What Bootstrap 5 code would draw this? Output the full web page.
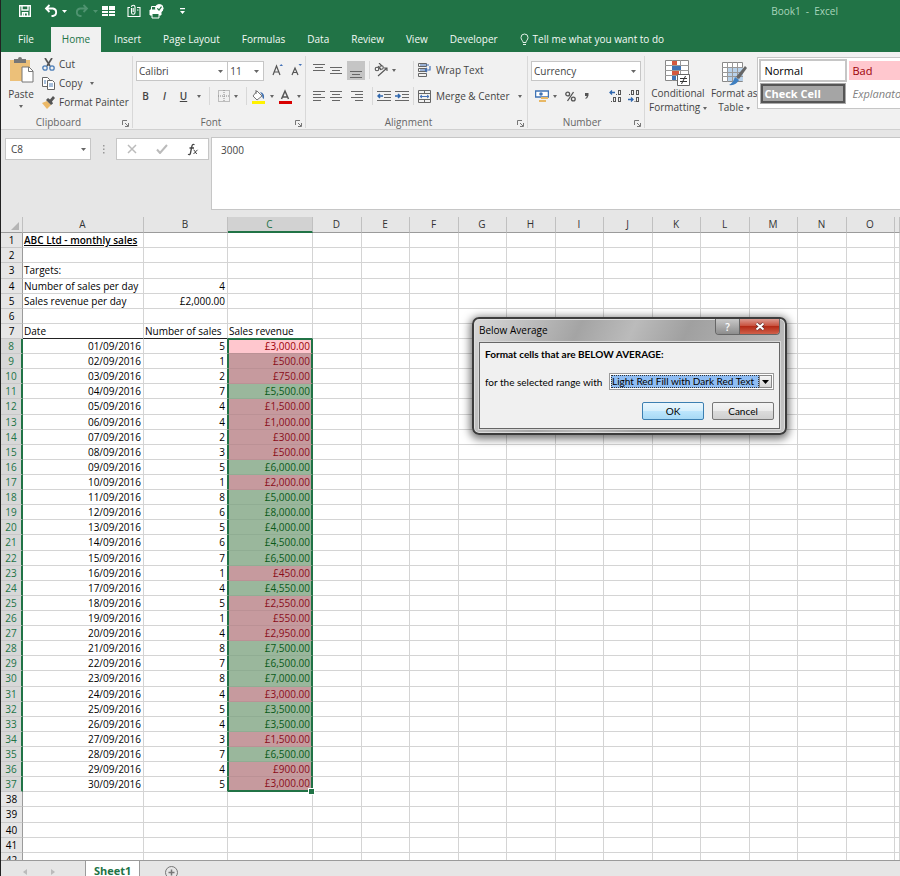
<!DOCTYPE html>
<html lang="en">
<head>
<meta charset="utf-8">
<meta name="viewport" content="width=device-width, initial-scale=1">
<title>Book1 - Excel</title>
<link href="https://cdn.jsdelivr.net/npm/bootstrap@5.3.0/dist/css/bootstrap.min.css" rel="stylesheet">
<style>
:root{--xl-green:#217346;--xl-face:#f1f1f1;--xl-bar:#e6e6e6;--xl-line:#d4d4d4;--xl-edge:#ababab}
body{font-family:"Open Sans","Noto Sans",sans-serif;font-size:10px;line-height:14px;color:#444;background:#fff}
button{font:inherit;color:inherit;background:none;border:0;padding:0;white-space:nowrap}
svg{display:block;flex:none}
.fw-bold{font-weight:600!important}
.app-shell{height:100vh;overflow:hidden;border-left:1px solid #222}
.title-strip,.tab-strip{background:var(--xl-green);color:#fff}
.title-strip{height:27px;padding:0 0 5px 17px}
.title-strip button{height:22px}
.doc-name{color:#a9d5bb;padding-right:62px}
.tab-strip{height:25px;padding-left:8px}
.tab-strip a{color:#f4faf6;text-decoration:none;height:25px;line-height:25px;padding:0 9px}
.tab-strip a.is-open{background:var(--xl-face);color:var(--xl-green);padding:0 11px}
.ribbon-bar{background:var(--xl-face);height:78px;border-bottom:1px solid #d0d0d0;overflow:hidden}
.ribbon-group{position:relative;border-right:1px solid #d8d8d8;height:72px;margin-top:4px;padding:1px 3px 0;flex:none}
.group-title{position:absolute;left:0;right:0;bottom:-1px;text-align:center;color:#666}
.launcher{position:absolute;right:3px;bottom:1px}
.w-clip{width:132px}.w-font{width:173px}.w-align{width:222px}.w-num{width:117px}
.clip-list button{height:14px;margin-bottom:5px}
.letter-btn{width:19px}
.align-left-part{width:104px}
.tool-row{height:26px}
.tool-row button,.big-tool{flex:none}
.tool-rule{width:1px;height:18px;background:#d8d8d8}
.caret-s{width:0;height:0;border:2px solid transparent;border-top:3px solid #666;border-bottom:0;flex:none;display:inline-block}
.drop-box{appearance:none;border:1px solid #c6c6c6;border-radius:0;background:#fff url("data:image/svg+xml,%3Csvg xmlns='http://www.w3.org/2000/svg' width='5' height='3'%3E%3Cpath d='M0 0h5L2.5 3z' fill='%23666'/%3E%3C/svg%3E") no-repeat right 4px center;font:inherit;color:#444;height:20px;padding:0 2px;outline:0}
.pick-font{width:93px}.pick-size{width:36px}
.pressed{background:#c5c5c5}
.style-gallery{border:1px solid #c6c6c6;background:#fff;border-right:0;height:52px;margin-top:1px;padding:3px 0 0 3px;overflow:hidden;min-width:0}
.style-gallery button{width:84px;height:19px;text-align:left;font-size:11px;line-height:17px;padding:0 3px;flex:none}
.st-normal{outline:2px solid #c6c6c6;color:#000}
.st-bad{background:#ffc7ce!important;color:#9c0006!important}
.st-check{background:#a5a5a5!important;border:2px solid #555!important;outline:1px solid #aaa;color:#fff!important;font-weight:700!important;line-height:14px!important;padding:0 1px!important}
.st-note{font-style:italic!important;color:#7f7f7f!important}
.formula-zone{background:var(--xl-bar);height:88px;padding:8px 0 7px 4px}
.white-box{background:#fff;border:1px solid #c6c6c6}
.name-pick{width:86px;height:22px;padding-left:5px}
.fx-box{width:93px;height:22px}
.formula-field{border:1px solid #c6c6c6;border-right:0;resize:none;height:73px;padding:5px 9px;margin-top:-1px;margin-left:2px;color:#444;outline:0;font:inherit;line-height:14px;border-radius:0}
.sheet-zone{overflow:hidden;min-height:0}
.cell-grid{table-layout:fixed;width:100%;border-collapse:separate;border-spacing:0;color:#000}
.cell-grid th,.cell-grid td{padding:0 2px 0 1px;height:15px;line-height:14px;border-right:1px solid var(--xl-line);border-bottom:1px solid var(--xl-line);white-space:nowrap;overflow:hidden;font-weight:400;vertical-align:top}
.cell-grid tbody tr:nth-child(9n+3) td,.cell-grid tbody tr:nth-child(9n+3) th{height:16px}
.cell-grid thead th{background:var(--xl-bar);border-right-color:#c0c0c0;border-bottom-color:#9b9b9b;text-align:center;color:#333;height:16px}
.cell-grid tbody th{background:var(--xl-bar);text-align:center;border-right-color:#9b9b9b;border-bottom-color:#c8c8c8;padding:0}
.cell-grid thead th.col-on{background:#d2d2d2;color:var(--xl-green);border-bottom:2px solid var(--xl-green)}
.cell-grid tbody th.row-on{background:#d8d8d8;color:var(--xl-green);border-right:2px solid var(--xl-green)}
.cell-grid td.num{text-align:right}
.cell-grid td.ruled{border-bottom-color:#222}
.cell-grid td.sel-top{border-bottom:1px solid var(--xl-green)}
.cell-grid td.pre-sel{border-right-color:var(--xl-green)}
.cell-grid td.sel{border-left:1px solid var(--xl-green);border-right:2px solid var(--xl-green);padding-right:1px;position:relative}
.cell-grid td.low{background:#c69a9e;color:#8a0d19;border-bottom-color:#bb9195}
.cell-grid td.high{background:#9ab79c;color:#0a5a18;border-bottom-color:#90ad93}
.cell-grid td.active{background:#ffc7ce;color:#9c0006;border-top:1px solid var(--xl-green);line-height:13px}
.cell-grid td.sel-end{border-bottom:2px solid var(--xl-green);overflow:visible;line-height:13px}
.fill-knob{position:absolute;right:-3px;bottom:-4px;width:5px;height:5px;background:var(--xl-green);outline:1px solid #fff}
.c-head{width:22px}.c-a{width:121px}.c-b{width:84px}.c-c{width:85px}.c-odd{width:49px}.c-even{width:48px}
.sheet-tabs{height:16px;background:var(--xl-bar);border-top:1px solid #9b9b9b;overflow:hidden;flex:none}
.sheet-nav{width:84px;padding-left:22px;color:#bbb}
.sheet-tabs a{background:#fff;color:var(--xl-green);font-weight:700;font-size:11px;line-height:19px;height:20px;padding:0 8px;border:1px solid #9b9b9b;border-width:0 1px;text-decoration:none}
.dlg{position:absolute;left:472px;top:317px;width:315px;height:118px;border:2px solid #3c3c3c;border-radius:7px;padding:0 5px 5px;background:linear-gradient(115deg,#d8d8d8 0,#a4a4a4 30%,#bbb 45%,#a0a0a0 60%,#c5c5c5 100%);box-shadow:0 2px 8px 2px rgba(0,0,0,.55),inset 0 0 0 1px #ddd;color:#000}
.dlg-head{height:23px}
.dlg-head .cap{padding-top:4px}
.dlg-btns{border:1px solid #666;border-top:0;border-radius:0 0 4px 4px;height:16px;overflow:hidden}
.dlg-btns button{color:#fff;height:15px}
.b-help{width:24px;background:linear-gradient(#c8c8c8,#8d8d8d)!important;border-right:1px solid #666!important}
.b-shut{width:39px;background:linear-gradient(#dc9a90 0,#c9523f 45%,#b42b17 50%,#d0604a)!important}
.dlg-body{font-family:"Lato","Open Sans",sans-serif;background:#f0f0f0;border:1px solid #666;outline:1px solid #d8d8d8;height:87px;padding:4px 5px;white-space:nowrap}
.dlg-heading{font-weight:700}
.dlg-pick{width:165px;height:17px;border-color:#999;padding:1px;background:#fff}
.dlg-pick select{appearance:none;border:1px dotted #333;border-radius:0;background:#8fbdf3;color:#000;font:inherit;line-height:11px;width:148px;height:13px;padding:0;outline:0}
.pick-arrow{width:13px;height:13px;border:1px solid #888;background:linear-gradient(#f6f6f6,#d5d5d5)}
.dlg-btn{width:62px;height:18px;line-height:14px!important;border:1px solid #777!important;border-radius:2px;background:linear-gradient(#f4f4f4 0,#ebebeb 48%,#dcdcdc 50%,#cfcfcf)!important}
.dlg-btn.primary{border-color:#3c7fb1!important;background:linear-gradient(#eaf6fd 0,#d6effc 48%,#bde6fd 50%,#a7d9f5)!important}
</style>
</head>
<body>
<div class="app-shell d-flex flex-column">
  <header>
    <div class="title-strip d-flex align-items-center">
      <button aria-label="Save"><svg width="14" height="14" fill="none" stroke="#fff" stroke-width="1.4"><path d="M1.7 1.7h10.6v10.6H1.7zM4 2v4h6V2M4.5 12V8.7h5V12"/><path d="M6.3 9v3"/></svg></button>
      <button class="d-flex align-items-center ms-2 ps-1" aria-label="Undo"><svg width="14" height="14" fill="none" stroke="#fff" stroke-width="1.8"><path d="M5.5 1 2 4.5 5.5 8M2.5 4.5H9a3.8 3.8 0 0 1 0 7.500H7.500"/></svg><svg class="ms-1" width="5" height="3"><path d="M0 0h5L2.500 3z" fill="#fff"/></svg></button>
      <button class="d-flex align-items-center ms-2" aria-label="Redo" disabled><svg width="14" height="14" fill="none" stroke="#4f9370" stroke-width="1.8"><path d="M8.500 1 12 4.500 8.500 8M11.500 4.500H5a3.800 3.800 0 0 0 0 7.500h1.500"/></svg><svg class="ms-1" width="5" height="3"><path d="M0 0h5L2.500 3z" fill="#4f9370"/></svg></button>
      <button class="ms-1" aria-label="Freeze panes"><svg width="13" height="12" fill="#fff"><path d="M0 1h6v4H0zM7 1h6v4H7zM0 6h6v2H0zM7 6h6v2H7zM0 9h6v2H0zM7 9h6v2H7z"/></svg></button>
      <button class="ms-2 ps-1" aria-label="Attach"><svg width="14" height="14" fill="none" stroke="#fff" stroke-width="1.1"><path d="M3 3.500H1v9h12v-9h-3M4.500 4v4.500a1.700 1.700 0 0 0 3.500 0V3a1.700 1.700 0 0 0-3.500 0M6.200 4v4M10 6h1.500"/></svg></button>
      <button class="ms-2" aria-label="Print preview"><svg width="15" height="15" fill="none" stroke="#fff"><path d="M1 6h11v5H1z" fill="#fff"/><path d="M3 9.500h7V14H3z" fill="#217346"/><path d="M2.500 6V2.500H7"/><circle cx="10.300" cy="4.300" r="3.800" fill="#fff"/><path d="M8.300 4.300 10 6l2.500-3.300" stroke="#217346" stroke-width="1.200"/></svg></button>
      <button class="ms-3" aria-label="Customize toolbar"><svg width="6" height="7" fill="#fff"><path d="M0 0h5v1.200H0zM0 3h5L2.500 6z"/></svg></button>
      <div class="doc-name ms-auto">Book1 &nbsp;-&nbsp; Excel</div>
    </div>
    <nav class="tab-strip d-flex" aria-label="Ribbon tabs">
      <a href="#">File</a><a href="#" class="is-open ms-2">Home</a><a href="#" class="ms-1">Insert</a><a href="#" class="ms-1">Page Layout</a><a href="#" class="ms-1">Formulas</a><a href="#" class="ms-1">Data</a><a href="#" class="ms-1">Review</a><a href="#" class="ms-1">View</a><a href="#" class="ms-1">Developer</a>
      <a href="#" class="d-flex align-items-center gap-1 ms-1"><svg width="9" height="13" fill="none" stroke="#e4f2e9"><path d="M3 9.500C3 7.500 1 7 1 4.500a3.500 3.500 0 0 1 7 0C8 7 6 7.500 6 9.500zM3 11.500h3"/></svg>Tell me what you want to do</a>
    </nav>
    <div class="ribbon-bar d-flex">
      <section class="ribbon-group w-clip d-flex align-items-start" aria-label="Clipboard">
        <button class="big-tool d-flex flex-column align-items-center ms-1"><svg width="26" height="26" viewBox="0 0 26 26"><path d="M2 3h20v21H2z" fill="#ecc079"/><path d="M6 2h4a2 2 0 0 1 4 0h4v4H6z" fill="#777"/><path d="M14 10h7l4 4v11H14z" fill="#fff" stroke="#777"/><path d="M20.500 10v4.500H25" fill="none" stroke="#777"/></svg><span class="mt-1">Paste</span><i class="caret-s mt-1"></i></button>
        <div class="clip-list ms-2">
          <button class="d-flex align-items-center gap-1"><svg width="13" height="13" fill="none"><path d="M3 0l5 8M10 0 5 8" stroke="#555" stroke-width="1.700"/><circle cx="3" cy="10" r="2.200" stroke="#4d7fb8" stroke-width="1.300"/><circle cx="10" cy="10" r="2.200" stroke="#4d7fb8" stroke-width="1.300"/></svg>Cut</button>
          <button class="d-flex align-items-center gap-1"><svg width="13" height="13" fill="#fff" stroke="#666"><path d="M.5.5h5l2 2v7h-7z"/><path d="M5.500 3.500h5l2 2v7h-7z"/><path d="M2 4h2M2 6h2M7 7h4M7 9h4" stroke="#4d7fb8"/></svg>Copy<i class="caret-s ms-1"></i></button>
          <button class="d-flex align-items-center gap-1"><svg width="13" height="13"><path d="M0 7l5-2 4 4-4 4z" fill="#ecb968"/><path d="M4 4l2-2 2 1.500L11 0l2 2-3 3.500 1 2L9 9z" fill="#555"/></svg>Format Painter</button>
        </div>
        <div class="group-title pe-3">Clipboard</div>
        <button class="launcher" aria-label="Clipboard options"><svg width="7" height="7" fill="none" stroke="#777"><path d="M.5 5V.5H5M3 3l3 3M6.500 3v3.500H3"/></svg></button>
      </section>
      <section class="ribbon-group w-font" aria-label="Font">
        <div class="tool-row d-flex">
          <select class="drop-box mt-1 pick-font" aria-label="Font name"><option>Calibri</option></select><select class="drop-box mt-1 border-start-0 pick-size" aria-label="Font size"><option>11</option></select>
          <button class="ms-2" aria-label="Increase font size"><svg width="11" height="14"><path d="M1 12 4.500 3 8 12M2.200 9h4.600" fill="none" stroke="#555" stroke-width="1.200"/><path d="M7.500 3 9.200 1 11 3z" fill="#4472b8"/></svg></button>
          <button class="ms-2" aria-label="Decrease font size"><svg width="11" height="14"><path d="M1 12 4 5l3 7M2 9.500h4" fill="none" stroke="#555" stroke-width="1.200"/><path d="M7.500 1H11L9.200 3z" fill="#4472b8"/></svg></button>
        </div>
        <div class="tool-row d-flex align-items-center">
          <button class="letter-btn fw-bold" aria-label="Bold">B</button><button class="letter-btn fst-italic fw-bold" aria-label="Italic">I</button><button class="letter-btn text-decoration-underline fw-bold" aria-label="Underline">U</button><i class="caret-s ms-1"></i><i class="tool-rule ms-2"></i>
          <button class="ms-2" aria-label="Borders"><svg width="12" height="12" fill="none" stroke="#888" stroke-dasharray="1 1"><path d="M.5.5h11v11H.5zM6 0v12M0 6h12"/></svg></button><i class="caret-s ms-1"></i><i class="tool-rule ms-2"></i>
          <button class="ms-1" aria-label="Fill colour"><svg width="15" height="15"><path d="M6 2l5 5-5 4-4-4zM5 5V1" fill="#fff" stroke="#777"/><path d="M9 3q5 1 4 7-2-1-2-4z" fill="#3f6fae"/><path d="M1 12h13v3H1z" fill="#fff200"/></svg></button><i class="caret-s ms-1"></i>
          <button class="ms-1" aria-label="Font colour"><svg width="15" height="15"><path d="M3.500 10 7 2l3.500 8M4.500 8h5" fill="none" stroke="#555" stroke-width="1.500"/><path d="M1 12h13v3H1z" fill="#d80000"/></svg></button><i class="caret-s ms-1"></i>
        </div>
        <div class="group-title pe-3">Font</div>
        <button class="launcher" aria-label="Font options"><svg width="7" height="7" fill="none" stroke="#777"><path d="M.5 5V.5H5M3 3l3 3M6.500 3v3.500H3"/></svg></button>
      </section>
      <section class="ribbon-group w-align" aria-label="Alignment">
        <div class="tool-row d-flex align-items-center">
          <div class="align-left-part d-flex align-items-center">
          <button class="ms-1" aria-label="Top align"><svg width="13" height="16" stroke="#666"><path d="M0 2.500h12M2 5.500h8M0 8.500h12"/></svg></button>
          <button class="ms-1" aria-label="Middle align"><svg width="13" height="16" stroke="#666"><path d="M0 5.500h12M2 8.500h8M0 11.500h12"/></svg></button>
          <button class="pressed ms-1" aria-label="Bottom align"><svg width="18" height="19" stroke="#666"><path d="M3 10.500h12M5 13.500h8M3 16.500h12"/></svg></button>
          <i class="tool-rule ms-1"></i>
          <button class="ms-1" aria-label="Orientation"><svg width="14" height="14" fill="none" stroke="#555" stroke-width="1.100"><circle cx="3" cy="6" r="1.800"/><path d="M4 3l3 4"/><circle cx="7.500" cy="4.500" r="1.800"/><path d="M5 0l3 3M4 13l9-8M10 5h3v3"/></svg></button><i class="caret-s ms-1"></i>
          </div>
          <i class="tool-rule"></i>
          <button class="d-flex align-items-center ms-1"><svg width="14" height="14" fill="none" stroke="#666"><path d="M.5.5h8v3h-8zM.5 5.500h8v3h-8zM.5 10.500h8v3h-8z"/><path d="M2 7h10V3M9 9 7 7l2-2M2 2h9" stroke="#4472b8" stroke-width="1.200"/></svg><span class="ms-1">Wrap Text</span></button>
        </div>
        <div class="tool-row d-flex align-items-center">
          <div class="align-left-part d-flex align-items-center">
          <button class="ms-1" aria-label="Align left"><svg width="13" height="12" stroke="#666"><path d="M0 1.500h12M0 4.500h8M0 7.500h12M0 10.500h8"/></svg></button>
          <button class="ms-1" aria-label="Centre"><svg width="13" height="12" stroke="#666"><path d="M0 1.500h12M2 4.500h8M0 7.500h12M2 10.500h8"/></svg></button>
          <button class="ms-1 ps-1" aria-label="Align right"><svg width="13" height="12" stroke="#666"><path d="M0 1.500h12M4 4.500h8M0 7.500h12M4 10.500h8"/></svg></button>
          <i class="tool-rule ms-2"></i>
          <button class="ms-1" aria-label="Decrease indent"><svg width="14" height="12" stroke="#666"><path d="M0 1.500h14M7 4.500h7M7 7.500h7M0 10.500h14"/><path d="M6 6H1M3 4 1 6l2 2" stroke="#2f67ae" stroke-width="1.500" fill="none"/></svg></button>
          <button class="ms-1" aria-label="Increase indent"><svg width="14" height="12" stroke="#666"><path d="M0 1.500h14M7 4.500h7M7 7.500h7M0 10.500h14"/><path d="M0 6h5M3 4l2 2-2 2" stroke="#2f67ae" stroke-width="1.500" fill="none"/></svg></button>
          </div>
          <i class="tool-rule"></i>
          <button class="d-flex align-items-center ms-1"><svg width="14" height="13" fill="none" stroke="#666"><path d="M.5.5h12v12H.5zM0 3.500h13M0 9.500h13M6.500 0v3M6.500 10v3"/><path d="M2 6.500h9M4 5 2 6.500 4 8M9 5l2 1.500L9 8" stroke="#4472b8"/></svg><span class="ms-1">Merge &amp; Center</span><i class="caret-s ms-2"></i></button>
        </div>
        <div class="group-title pe-3">Alignment</div>
        <button class="launcher" aria-label="Alignment options"><svg width="7" height="7" fill="none" stroke="#777"><path d="M.5 5V.5H5M3 3l3 3M6.500 3v3.500H3"/></svg></button>
      </section>
      <section class="ribbon-group w-num" aria-label="Number">
        <div class="tool-row"><select class="drop-box w-100 mt-1" aria-label="Number format"><option>Currency</option></select></div>
        <div class="tool-row d-flex align-items-center">
          <button class="ms-1" aria-label="Accounting format"><svg width="14" height="13"><path d="M.5 1h13v6H.500z" fill="#fff" stroke="#3f73b5" stroke-width="1.500"/><circle cx="6" cy="4" r="1.800" fill="#3f73b5"/><path d="M6 7h7v2H6zM4 10h7v2H4z" fill="#e8b865"/></svg></button><i class="caret-s ms-1"></i>
          <button class="ms-2" aria-label="Percent"><svg width="11" height="11" fill="none" stroke="#555" stroke-width="1.300"><circle cx="2.700" cy="3" r="1.900"/><circle cx="8.300" cy="8" r="1.900"/><path d="M8.500 1 2.500 10"/></svg></button><button class="ms-2" aria-label="Comma style"><svg width="6" height="8"><path d="M1 1h3.500v2.500Q4 6 1.500 7V6Q3 5 2.700 4H1z" fill="#555"/></svg></button>
          <button class="ms-auto" aria-label="Increase decimal"><svg width="14" height="14" fill="none"><path d="M6 3.500H1M3 1.500l-2 2 2 2" stroke="#2f67ae" stroke-width="1.300"/><path d="M7 5.500h1M2 12.500h1" stroke="#555"/><rect x="9.500" y="1.500" width="2" height="4" stroke="#555"/><rect x="4.500" y="8.500" width="2" height="4" stroke="#555"/><rect x="9.500" y="8.500" width="2" height="4" stroke="#555"/></svg></button>
          <button class="ms-1" aria-label="Decrease decimal"><svg width="14" height="14" fill="none"><path d="M1 10.500h5M4 8.500l2 2-2 2" stroke="#2f67ae" stroke-width="1.300"/><path d="M2 5.500h1M7.500 12.500h1" stroke="#555"/><rect x="4.500" y="1.500" width="2" height="4" stroke="#555"/><rect x="9.500" y="1.500" width="2" height="4" stroke="#555"/><rect x="9.500" y="8.500" width="2" height="4" stroke="#555"/></svg></button>
        </div>
        <div class="group-title pe-2">Number</div>
        <button class="launcher" aria-label="Number options"><svg width="7" height="7" fill="none" stroke="#777"><path d="M.5 5V.5H5M3 3l3 3M6.500 3v3.500H3"/></svg></button>
      </section>
      <section class="d-flex pt-1 ps-1 flex-fill overflow-hidden" aria-label="Styles">
        <button class="big-tool d-flex flex-column align-items-center mb-auto pt-1"><svg width="26" height="26" fill="none"><path d="M.500.500h23v20H.500z" fill="#fff" stroke="#888"/><path d="M0 5.500h24M0 10.500h24M0 15.500h24M7.500 0v21M15.500 0v21" stroke="#999"/><path d="M7 1h5v4H7zM7 11h7v4H7z" fill="#d4583e"/><path d="M7 6h9v4H7zM7 16h4v4H7z" fill="#3f73b5"/><path d="M12.500 14.500h12v11h-12z" fill="#fff" stroke="#666"/><path d="M15 18.500h7M15 21.500h7M20.500 16l-4 8" stroke="#333"/></svg><span>Conditional</span><span>Formatting <i class="caret-s align-middle"></i></span></button>
        <button class="big-tool d-flex flex-column align-items-center ms-1 mb-auto pt-1"><svg width="26" height="26" fill="none"><path d="M1.500 2.500h20v19h-20z" fill="#fff" stroke="#888"/><path d="M6 7h16v14H6z" fill="#b9d2ea"/><path d="M1 7.500h21M1 12.500h21M1 16.500h21M6.500 2v20M11.500 2v20M16.500 2v20" stroke="#999"/><path d="M24 6l2 2-8 11-3-2z" fill="#666"/><path d="M14 17l4 3q-3 6-10 5 4-2 6-8z" fill="#3f7fc0"/></svg><span>Format as</span><span>Table <i class="caret-s align-middle"></i></span></button>
        <div class="style-gallery flex-fill">
          <div class="d-flex gap-1"><button class="st-normal">Normal</button><button class="st-bad">Bad</button></div>
          <div class="d-flex gap-1 mt-1"><button class="st-check">Check Cell</button><button class="st-note">Explanatory Text</button></div>
        </div>
      </section>
    </div>
  </header>

  <div class="formula-zone d-flex align-items-start">
    <select class="drop-box name-pick" aria-label="Name box"><option>C8</option></select>
    <svg class="ms-2" width="13" height="22" fill="#999"><path d="M4 7h1.500v1.500H4zM4 10.500h1.500V12H4zM4 14h1.500v1.500H4z"/></svg>
    <div class="fx-box white-box d-flex align-items-center justify-content-around ms-1">
      <button aria-label="Cancel entry"><svg width="10" height="10" stroke="#bbb" stroke-width="1.500"><path d="M1 1l8 8M9 1 1 9"/></svg></button>
      <button aria-label="Accept entry"><svg width="12" height="10" fill="none" stroke="#bbb" stroke-width="2"><path d="M1 5.500 4 9l7-8"/></svg></button>
      <button aria-label="Insert function"><svg width="12" height="13" fill="none" stroke="#444"><path d="M7.500 1.800Q5.500.5 4.900 3.200L3.500 10Q3 12.500 1 11.300M2.500 5h4.500" stroke-width="1.300"/><path d="M6.500 7q1.300 0 1.600 1.700t1.900 1.900M10.500 6.800 6.500 11"/></svg></button>
    </div>
    <textarea class="formula-field flex-fill" aria-label="Formula bar">3000</textarea>
  </div>

  <main class="sheet-zone flex-fill">
    <table class="cell-grid">
      <colgroup id="gridCols"><col class="c-head"><col class="c-a"><col class="c-b"><col class="c-c"></colgroup>
      <thead><tr id="gridHead"><th scope="col" aria-label="Select all"><svg class="ms-auto mt-1" width="9" height="9"><path d="M8 1v8H0z" fill="#b5b5b5"/></svg></th></tr></thead>
      <tbody id="gridBody"></tbody>
    </table>
  </main>

  <footer class="sheet-tabs d-flex">
    <div class="sheet-nav d-flex pt-2 gap-4"><svg width="4" height="6" fill="#bbb"><path d="M4 0v6L0 3z"/></svg><svg width="4" height="6" fill="#bbb"><path d="M0 0v6l4-3z"/></svg></div>
    <a href="#">Sheet1</a>
    <button class="ms-4 mt-1" aria-label="New sheet"><svg width="15" height="15" fill="none" stroke="#777"><circle cx="7.500" cy="7.500" r="6"/><path d="M4.500 7.500h6M7.500 4.500v6" stroke-width="1.500"/></svg></button>
  </footer>
</div>

<div class="dlg" role="dialog" aria-labelledby="dlgTitle">
  <div class="dlg-head d-flex align-items-start justify-content-between">
    <span class="cap" id="dlgTitle">Below Average</span>
    <div class="dlg-btns d-flex"><button class="b-help fw-bold" aria-label="Help">?</button><button class="b-shut" aria-label="Close"><svg class="mx-auto" width="10" height="9"><path d="M1.500 1.500l7 6M8.500 1.500l-7 6" stroke="#633" stroke-width="3.600"/><path d="M1.500 1.500l7 6M8.500 1.500l-7 6" stroke="#fff" stroke-width="2"/></svg></button></div>
  </div>
  <div class="dlg-body">
    <div class="dlg-heading">Format cells that are BELOW AVERAGE:</div>
    <div class="d-flex align-items-center justify-content-between mt-2 pt-1">
      <label for="fmtPick">for the selected range with</label>
      <div class="dlg-pick white-box d-flex justify-content-between"><select id="fmtPick"><option>Light Red Fill with Dark Red Text</option></select><span class="pick-arrow d-flex align-items-center justify-content-center"><svg width="7" height="4"><path d="M0 0h7L3.500 4z"/></svg></span></div>
    </div>
    <div class="d-flex justify-content-end gap-2 mt-2 pt-1"><button class="dlg-btn primary">OK</button><button class="dlg-btn">Cancel</button></div>
  </div>
</div>

<script src="https://cdn.jsdelivr.net/npm/bootstrap@5.3.0/dist/js/bootstrap.bundle.min.js"></script>
<script>
const letters = "ABCDEFGHIJKLMNO".split("");
const sales = [[1,5,"3,000"],[2,1,"500"],[3,2,"750"],[4,7,"5,500"],[5,4,"1,500"],[6,4,"1,000"],[7,2,"300"],[8,3,"500"],[9,5,"6,000"],[10,1,"2,000"],[11,8,"5,000"],[12,6,"8,000"],[13,5,"4,000"],[14,6,"4,500"],[15,7,"6,500"],[16,1,"450"],[17,4,"4,550"],[18,5,"2,550"],[19,1,"550"],[20,4,"2,950"],[21,8,"7,500"],[22,7,"6,500"],[23,8,"7,000"],[24,4,"3,000"],[25,5,"3,500"],[26,4,"3,500"],[27,3,"1,500"],[28,7,"6,500"],[29,4,"900"],[30,5,"3,000"]];
const top7 = {1:["<span class='fw-bold text-decoration-underline'>ABC Ltd - monthly sales</span>"],3:["Targets:"],4:["Number of sales per day","4"],5:["Sales revenue per day","£2,000.00"],7:["Date","Number of sales","Sales revenue"]};
let cols = "", head = "";
for (let i = 3; i < 15; i++) cols += `<col class="${i % 2 ? "c-odd" : "c-even"}">`;
gridCols.insertAdjacentHTML("beforeend", cols + "<col>");
letters.forEach(l => head += `<th scope="col"${l === "C" ? ' class="col-on"' : ""}>${l}</th>`);
gridHead.insertAdjacentHTML("beforeend", head + "<th></th>");
let body = "";
for (let r = 1; r <= 42; r++) {
  const s = r >= 8 && r <= 37 ? sales[r - 8] : null;
  body += `<tr><th scope="row"${s ? ' class="row-on"' : ""}>${r}</th>`;
  if (s) {
    const low = parseInt(s[2].replace(",", "")) <= 3000;
    const day = String(s[0]).padStart(2, "0");
    body += `<td class="num">${day}/09/2016</td><td class="num pre-sel">${s[1]}</td><td class="num sel ${low ? "low" : "high"}${r === 8 ? " active" : ""}${r === 37 ? " sel-end" : ""}">£${s[2]}.00${r === 37 ? '<span class="fill-knob"></span>' : ""}</td>`;
  } else {
    const t = top7[r] || [];
    for (let c = 0; c < 3; c++) {
      const cls = [];
      if (c === 1 && r < 6) cls.push("num");
      if (r === 7) cls.push(c === 2 ? "sel-top" : "ruled");
      body += `<td class="${cls.join(" ")}">${t[c] || ""}</td>`;
    }
  }
  body += "<td></td>".repeat(13) + "</tr>";
}
gridBody.innerHTML = body;
</script>
</body>
</html>
